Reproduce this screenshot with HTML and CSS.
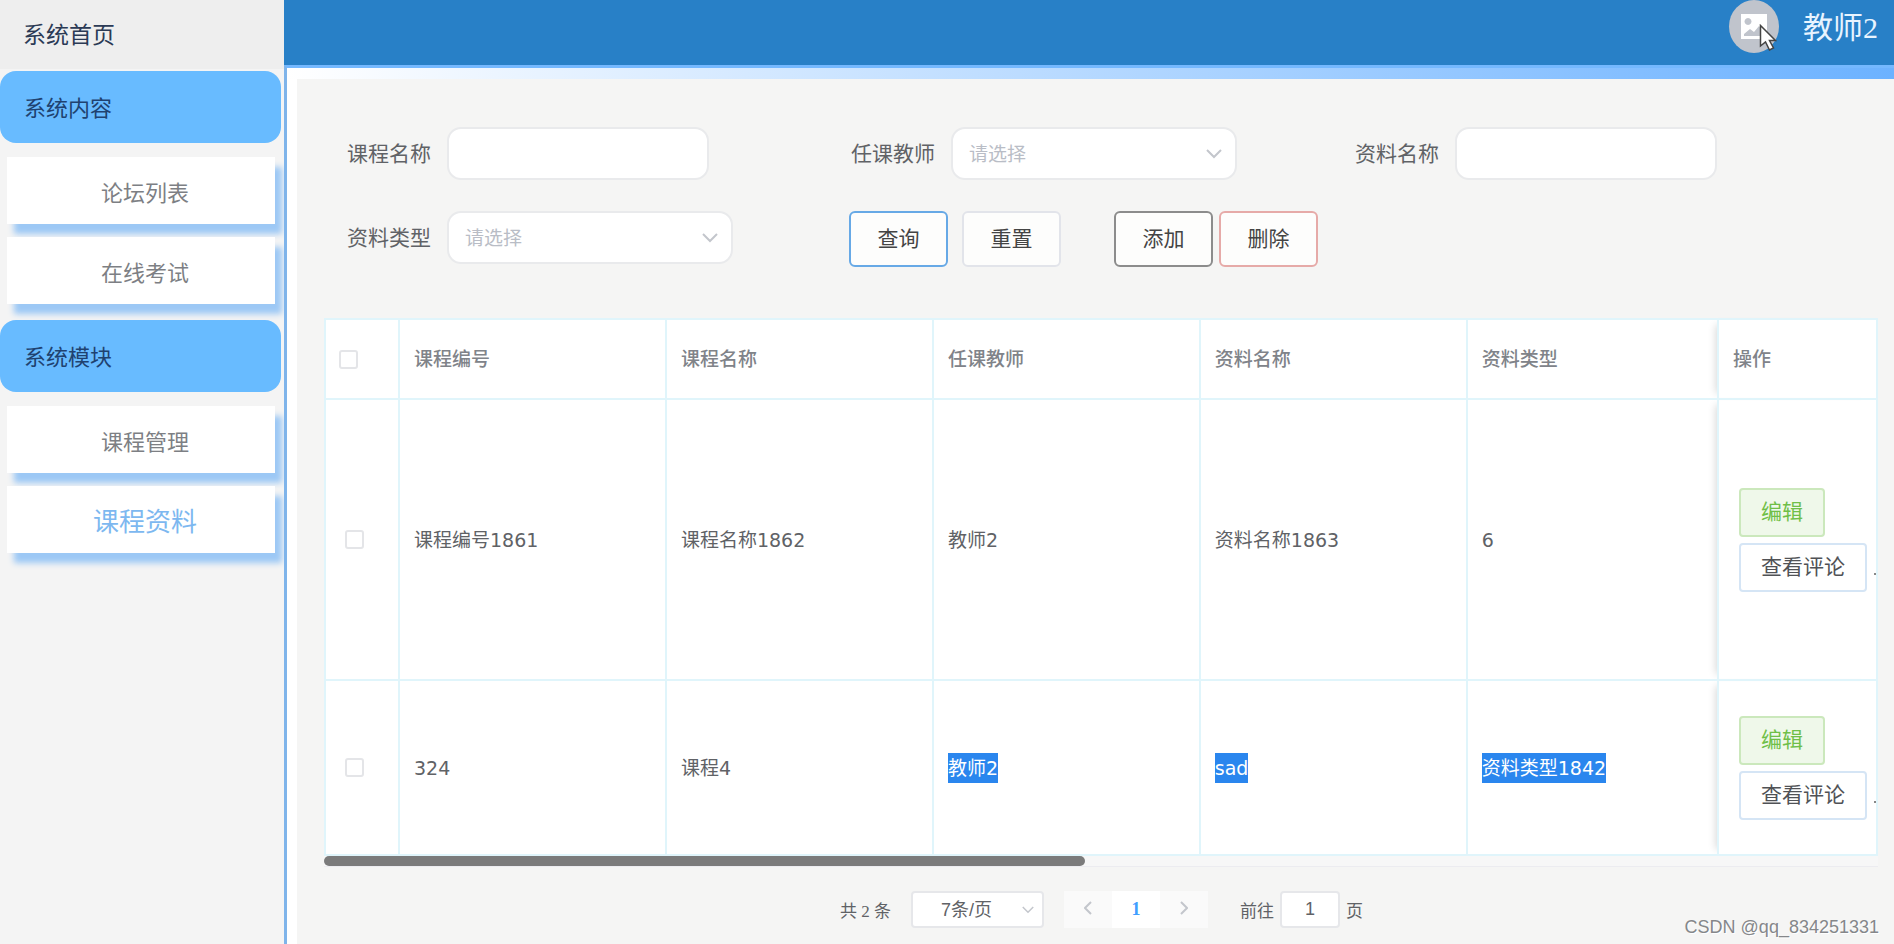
FILE: index.html
```html
<!DOCTYPE html>
<html lang="zh-CN">
<head>
<meta charset="utf-8">
<title>课程资料</title>
<link rel="stylesheet" href="styles.css">
</head>
<body>
<div class="app">
  <nav class="sidebar">
    <a class="home" href="#">系统首页</a>
    <button class="group" type="button">系统内容</button>
    <div class="cards">
      <a class="card" href="#">论坛列表</a>
      <a class="card" href="#">在线考试</a>
    </div>
    <button class="group" type="button">系统模块</button>
    <div class="cards">
      <a class="card" href="#">课程管理</a>
      <a class="card active" href="#">课程资料</a>
    </div>
  </nav>
  <div class="page">
    <header class="topbar">
      <span class="avatar">
        <svg width="28" height="28" viewBox="0 0 28 28"><path fill="#fff" fill-rule="evenodd" d="M1 1h26v25H1zM8 5a3.500 3.500 0 1 0 .01 0zM4 23h20v-3l-5-7-5 6-4-3-6 5z"/></svg>
        <svg class="pointer" width="18" height="28" viewBox="0 0 18 28"><path fill="#fff" stroke="#444" stroke-width="1.500" d="M1.500 1.500v20.500l5-4 4 8 4-2-4-7.500h6z"/></svg>
      </span>
      <span class="user">教师2</span>
    </header>
    <div class="strip"></div>
    <main class="content">
      <form class="filters">
        <div class="field"><label for="course">课程名称</label><input class="box" id="course" type="text"></div>
        <div class="field"><label for="teacher">任课教师</label><span class="select"><select class="box" id="teacher"><option>请选择</option></select><svg width="16" height="10" viewBox="0 0 16 10"><path d="M1 1l7 7 7-7"/></svg></span></div>
        <div class="field"><label for="material">资料名称</label><input class="box" id="material" type="text"></div>
        <div class="field"><label for="kind">资料类型</label><span class="select"><select class="box" id="kind"><option>请选择</option></select><svg width="16" height="10" viewBox="0 0 16 10"><path d="M1 1l7 7 7-7"/></svg></span></div>
        <div class="actions">
          <div class="pair wide"><button class="btn query" type="button">查询</button><button class="btn" type="button">重置</button></div>
          <div class="pair"><button class="btn add" type="button">添加</button><button class="btn remove" type="button">删除</button></div>
        </div>
      </form>
      <div class="grid">
        <table>
          <colgroup><col class="c-check"><col class="c-data"><col class="c-data"><col class="c-data"><col class="c-data"><col><col class="c-ops"></colgroup>
          <thead>
            <tr><th><input type="checkbox" aria-label="全选"></th><th>课程编号</th><th>课程名称</th><th>任课教师</th><th>资料名称</th><th>资料类型</th><th class="ops">操作</th></tr>
          </thead>
          <tbody>
            <tr class="tall"><td class="pick"><input type="checkbox" aria-label="选择课程编号1861"></td><td>课程编号1861</td><td>课程名称1862</td><td>教师2</td><td>资料名称1863</td><td>6</td>
              <td class="ops"><div class="tools"><button class="tool edit" type="button">编辑</button><div class="line"><button class="tool view" type="button">查看评论</button><i class="more"></i></div></div></td></tr>
            <tr class="short"><td class="pick"><input type="checkbox" aria-label="选择324"></td><td>324</td><td>课程4</td><td><mark>教师2</mark></td><td><mark>sad</mark></td><td><mark>资料类型1842</mark></td>
              <td class="ops"><div class="tools"><button class="tool edit" type="button">编辑</button><div class="line"><button class="tool view" type="button">查看评论</button><i class="more"></i></div></div></td></tr>
          </tbody>
        </table>
        <div class="track"><div class="thumb"></div></div>
      </div>
      <div class="pager">
        <span class="total">共 2 条</span>
        <span class="select size"><select aria-label="每页条数"><option>7条/页</option></select><svg width="12" height="8" viewBox="0 0 16 10"><path d="M1 1l7 7 7-7"/></svg></span>
        <div class="pages">
          <button type="button" aria-label="上一页"><svg width="8" height="14" viewBox="0 0 8 14"><path d="M7 1L1 7l6 6"/></svg></button>
          <button class="current" type="button">1</button>
          <button type="button" aria-label="下一页"><svg width="8" height="14" viewBox="0 0 8 14"><path d="M1 1l6 6-6 6"/></svg></button>
        </div>
        <label class="jump">前往<input type="text" value="1">页</label>
      </div>
    </main>
  </div>
</div>
<div class="credit">CSDN @qq_834251331</div>
</body>
</html>
```
FILE: styles.css
```css
* { box-sizing: border-box; }
body {
  margin: 0;
  color: #606266;
  background: #f5f5f4;
  font-family: "DejaVu Sans", "Noto Sans CJK SC", sans-serif;
  font-size: 19px;
}
button, input, select { font: inherit; color: inherit; margin: 0; }
a { color: inherit; text-decoration: none; }

.app { display: flex; min-height: 100vh; }

.sidebar {
  flex: 0 0 284px;
  background: #f4f4f4;
  overflow: hidden;
  font-family: "Liberation Serif", "Noto Sans CJK SC", serif;
}
.home {
  display: flex;
  align-items: center;
  height: 69px;
  padding: 0 23px 4px;
  margin-bottom: 2px;
  background: #eee;
  color: #2b3a55;
  font-size: 23px;
}
.group {
  display: block;
  width: 281px;
  height: 72px;
  padding: 0 24px 2px;
  border: 0;
  border-radius: 16px;
  background: #68bbff;
  color: #1f4270;
  font-size: 22px;
  text-align: left;
}
.cards {
  display: flex;
  flex-direction: column;
  gap: 13px;
  padding: 14px 9px 16px 7px;
}
.card {
  display: flex;
  align-items: center;
  justify-content: center;
  height: 67px;
  padding-left: 8px;
  background: #fff;
  box-shadow: 7px 10px 6px #9cc8f5;
  color: #7d7f84;
  font-size: 22px;
}
.card.active { color: #7db8f0; font-size: 26px; }

.page { flex: 1; min-width: 0; display: flex; flex-direction: column; }
.topbar {
  display: flex;
  align-items: center;
  justify-content: flex-end;
  gap: 24px;
  height: 65px;
  padding: 0 16px 12px 0;
  background: #2880c7;
}
.avatar {
  position: relative;
  display: flex;
  align-items: center;
  justify-content: center;
  width: 50px;
  height: 53px;
  border-radius: 50%;
  background: #c0c4cc;
}
.pointer { position: absolute; left: 30px; top: 24px; }
.user {
  padding-bottom: 3px;
  color: #e8f4ff;
  font: 30px "Liberation Serif", "Noto Sans CJK SC", serif;
}
.strip {
  height: 14px;
  border-top: 3px solid #74b8ff;
  border-left: 3px solid #7fb4ea;
  background: linear-gradient(90deg, #fff, #6cb2ff);
}
.content {
  flex: 1;
  padding: 48px 16px 16px 37px;
  border-left: 3px solid #7fb4ea;
  box-shadow: inset 10px 0 0 #fff;
}

.filters {
  display: grid;
  grid-template-columns: 504px 504px 1fr;
  row-gap: 31px;
  padding-left: 23px;
}
.field { display: flex; align-items: center; gap: 16px; height: 53px; }
.field label {
  padding-bottom: 4px;
  font: 21px "Liberation Serif", "Noto Sans CJK SC", serif;
}
.box {
  width: 262px;
  height: 53px;
  padding: 0 16px;
  border: 2px solid #e9eaec;
  border-radius: 14px;
  background: #fff;
}
.select { position: relative; display: flex; align-items: center; }
.select select { appearance: none; color: #b9bdc6; }
.select .box { width: 286px; }
.select svg {
  position: absolute;
  right: 15px;
  pointer-events: none;
}
svg path:not([fill]) { fill: none; stroke: #c3c6cc; stroke-width: 2; }
.actions { display: flex; gap: 53px; grid-column: 2 / 4; margin-left: -2px; }
.pair { display: flex; gap: 6px; }
.pair.wide { gap: 14px; }
.btn {
  width: 99px;
  height: 56px;
  padding: 0 0 4px;
  border: 2px solid #e2e4ea;
  border-radius: 6px;
  background: #fdfdfc;
  color: #444;
  font-size: 21px;
}
.query { border-color: #67a9e6; }
.add { border-color: #8c8c8c; }
.remove { border-color: #e6aaa8; }

.grid { margin-top: 51px; }
table {
  width: 100%;
  table-layout: fixed;
  border-collapse: collapse;
  background: #fff;
}
.c-check { width: 74px; }
.c-data { width: 17.2%; }
.c-ops { width: 159px; }
th, td {
  padding: 0 14px;
  border: 2px solid #e0f5fb;
  text-align: left;
  font-weight: normal;
  line-height: 30px;
}
th { height: 80px; color: #808389; font-weight: 500; }
.tall td { height: 281px; }
.short td { height: 175px; }
th:first-child { padding-left: 13px; }
.pick { padding-left: 19px; }
input[type="checkbox"] {
  appearance: none;
  display: block;
  width: 19px;
  height: 19px;
  border: 2px solid #e4e5e8;
  border-radius: 3px;
  background: #fff;
}
.ops { box-shadow: -8px 0 8px -6px rgba(0, 0, 0, 0.16); }
td.ops { padding: 0 0 0 20px; }
.tools {
  display: flex;
  flex-direction: column;
  align-items: flex-start;
  gap: 6px;
}
.line { display: flex; align-items: center; gap: 7px; }
.tool {
  height: 49px;
  padding: 0 20px;
  border: 2px solid #d5e5f5;
  border-radius: 4px;
  background: #fff;
  color: #505256;
  font-size: 21px;
  white-space: nowrap;
}
.edit { border-color: #cbe8bc; background: #eff8ea; color: #6fbf48; }
.more { width: 2px; height: 2px; margin-top: 14px; background: #888; }
mark { display: inline-block; background: #2a86ee; color: #fff; }
.track { height: 11px; border-bottom: 1px solid #ececf0; background: #f7f7f7; }
.thumb { width: 49%; height: 10px; border-radius: 5px; background: #7b7b7b; }

.pager {
  display: flex;
  align-items: center;
  margin-top: 24px;
  padding-left: 516px;
  font: 17px "Liberation Serif", "Noto Sans CJK SC", serif;
}
.size { margin: 0 20px 0 20px; }
.size select {
  width: 133px;
  height: 37px;
  padding: 0 30px 0 28px;
  border: 2px solid #e6e7ea;
  border-radius: 4px;
  background: #fff;
  color: #606266;
  font-family: "Liberation Sans", "Noto Sans CJK SC", sans-serif;
}
.size select, .jump input { font-size: 18px; }
.size svg { right: 10px; }
.pages { display: flex; }
.pages button {
  width: 48px;
  height: 37px;
  border: 0;
  background: #fafafa;
}
.pages .current { background: #fff; color: #409eff; font-weight: bold; font-size: 18px; }
.jump { display: flex; align-items: center; gap: 6px; margin-left: 32px; }
.jump input {
  width: 60px;
  height: 37px;
  border: 2px solid #e6e7ea;
  border-radius: 4px;
  background: #fff;
  font-family: "Liberation Sans", sans-serif;
  text-align: center;
}
.credit {
  position: absolute;
  right: 15px;
  bottom: 6px;
  color: #85878a;
  font: 18px "Liberation Sans", sans-serif;
  text-shadow: 1px 1px 0 #fff;
}
```
